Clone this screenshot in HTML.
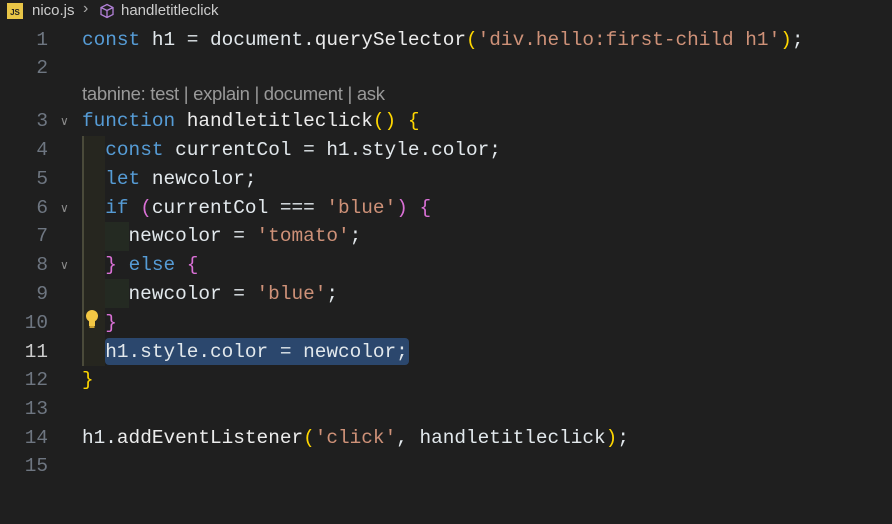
<!DOCTYPE html>
<html><head><style>
body{margin:0;width:892px;height:524px;background:#1f1f1f;overflow:hidden;position:relative;font-family:"Liberation Mono",monospace;}
.bc{position:absolute;left:0;top:0;height:24px;width:892px;font-family:"Liberation Sans",sans-serif;font-size:15px;color:#cccccc;}
.ln{position:absolute;left:0;width:48px;text-align:right;font-size:19.4px;color:#6e7681;line-height:28px;}
.cd{position:absolute;left:82px;font-size:19.4px;color:#e2e8ec;white-space:pre;line-height:28px;}
.k{color:#569cd6}.f{color:#ececec}.s{color:#ce9178}.y{color:#ffd700}.p{color:#da70d6}
.fold{position:absolute;left:60px;color:#8b8b8b;font-size:12px;font-family:"Liberation Sans",sans-serif;}
</style></head><body>
<div class="bc">
<div style="position:absolute;left:7px;top:3px;width:16px;height:16px;background:#e8c547;color:#1f1f1f;font-size:8px;font-weight:bold;line-height:20px;text-align:center;">JS</div>
<span style="position:absolute;left:32px;top:2px;">nico.js</span>
<span style="position:absolute;left:83px;top:0px;color:#aaa;font-size:16px;">›</span>
<svg style="position:absolute;left:99px;top:3px" width="16" height="16" viewBox="0 0 16 16"><path d="M8 1.5L14 4.5V11.5L8 14.5L2 11.5V4.5Z M2 4.5L8 7.5L14 4.5 M8 7.5V14.5" fill="none" stroke="#b180d7" stroke-width="1.3"/></svg>
<span style="position:absolute;left:121px;top:2px;">handletitleclick</span>
</div>
<div style="position:absolute;left:82px;top:136px;width:23px;height:230px;background:#26261f;border-left:2px solid #4a4a3a;box-sizing:border-box"></div>
<div style="position:absolute;left:105px;top:222px;width:24px;height:29px;background:#242a22"></div>
<div style="position:absolute;left:105px;top:279px;width:24px;height:29px;background:#242a22"></div>
<div style="position:absolute;left:105px;top:338px;width:304px;height:27px;background:#2c4a72;border-radius:4px;opacity:.95"></div>

<div class="ln" style="top:26px">1</div><div class="cd" style="top:26px"><span class="k">const</span> h1 = document.<span class="f">querySelector</span><span class="y">(</span><span class="s">'div.hello:first-child h1'</span><span class="y">)</span>;</div>
<div class="ln" style="top:54px">2</div>
<div style="position:absolute;left:82px;top:83px;font-family:'Liberation Sans',sans-serif;font-size:18.5px;letter-spacing:-0.3px;color:#999999;">tabnine: test | explain | document | ask</div>
<div class="ln" style="top:107px">3</div><div class="fold" style="top:114px">∨</div><div class="cd" style="top:107px"><span class="k">function</span> <span class="f">handletitleclick</span><span class="y">()</span> <span class="y">{</span></div>
<div class="ln" style="top:136px">4</div><div class="cd" style="top:136px">  <span class="k">const</span> currentCol = h1.style.color;</div>
<div class="ln" style="top:165px">5</div><div class="cd" style="top:165px">  <span class="k">let</span> newcolor;</div>
<div class="ln" style="top:194px">6</div><div class="fold" style="top:201px">∨</div><div class="cd" style="top:194px">  <span class="k">if</span> <span class="p">(</span>currentCol === <span class="s">'blue'</span><span class="p">)</span> <span class="p">{</span></div>
<div class="ln" style="top:222px">7</div><div class="cd" style="top:222px">    newcolor = <span class="s">'tomato'</span>;</div>
<div class="ln" style="top:251px">8</div><div class="fold" style="top:258px">∨</div><div class="cd" style="top:251px">  <span class="p">}</span> <span class="k">else</span> <span class="p">{</span></div>
<div class="ln" style="top:280px">9</div><div class="cd" style="top:280px">    newcolor = <span class="s">'blue'</span>;</div>
<div class="ln" style="top:309px">10</div>
<svg style="position:absolute;left:84px;top:309px" width="16" height="20" viewBox="0 0 16 20"><circle cx="8" cy="7" r="6" fill="#f2c744"/><rect x="5" y="11" width="6" height="6" fill="#f2c744"/><rect x="5.5" y="17" width="5" height="2" fill="#c9a030"/></svg>
<div class="cd" style="top:309px">  <span class="p">}</span></div>
<div class="ln" style="top:338px;color:#cccccc">11</div><div class="cd" style="top:338px">  h1.style.color = newcolor;</div>
<div class="ln" style="top:366px">12</div><div class="cd" style="top:366px"><span class="y">}</span></div>
<div class="ln" style="top:395px">13</div>
<div class="ln" style="top:424px">14</div><div class="cd" style="top:424px">h1.<span class="f">addEventListener</span><span class="y">(</span><span class="s">'click'</span>, handletitleclick<span class="y">)</span>;</div>
<div class="ln" style="top:452px">15</div>
</body></html>
